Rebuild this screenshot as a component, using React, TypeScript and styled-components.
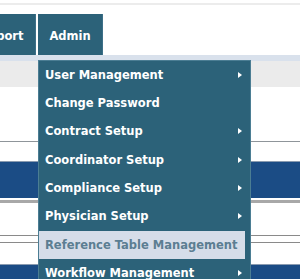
import React from "react";
import styled, { createGlobalStyle } from "styled-components";

const Global = createGlobalStyle`
  html, body { margin: 0; padding: 0; overflow: hidden; background: #ffffff; }
  #root { width: 304px; height: 279px; overflow: hidden; position: relative; }
`;

const Page = styled.div`
  position: relative;
  width: 300px;
  height: 279px;
  font-family: "DejaVu Sans", Verdana, sans-serif;
`;

const TopRule = styled.div`
  margin-top: 3px;
  height: 2px;
  background: #ececec;
`;

const Nav = styled.nav`
  display: flex;
  gap: 2px;
  margin-top: 9px;
  margin-left: -32px;
  height: 41px;
  background: #ffffff;
`;

const NavItem = styled.div<{ $w: number }>`
  width: ${(p) => p.$w}px;
  background: #2c6279;
  color: #ffffff;
  font-weight: bold;
  font-size: 11.5px;
  display: flex;
  align-items: center;
  justify-content: center;
  padding-top: 3px;
  box-sizing: border-box;
  border-right: 1px solid #3d7088;
`;

const SubStrip = styled.div`
  height: 6px;
  background: #d9e1ec;
`;

const SubBand = styled.div`
  height: 26px;
  background: #ebebeb;
`;

const Spacer = styled.div<{ $h: number }>`
  height: ${(p) => p.$h}px;
`;

const Line = styled.div<{ $h?: number; $c?: string }>`
  height: ${(p) => p.$h ?? 1}px;
  background: ${(p) => p.$c ?? "#9a9a9a"};
`;

const BlueBand = styled.div<{ $h: number }>`
  height: ${(p) => p.$h}px;
  background: #1b4c85;
  border-top: 1px solid #8a9bb0;
  box-sizing: border-box;
`;

const Menu = styled.ul`
  position: absolute;
  left: 38px;
  top: 57px;
  width: 213px;
  height: 240px;
  margin: 0;
  padding: 0;
  list-style: none;
  background: #2c6279;
  border: 1px solid #4b7d93;
  border-bottom: none;
  box-sizing: border-box;
`;

const MenuItem = styled.li<{ $active?: boolean }>`
  height: 28.35px;
  margin-right: 5px;
  display: flex;
  align-items: center;
  justify-content: space-between;
  padding: 0 3px 1px 6px;
  box-sizing: border-box;
  font-size: 11.5px;
  font-weight: bold;
  color: ${(p) => (p.$active ? "#5c7e92" : "#ffffff")};
  background: ${(p) => (p.$active ? "#d6dde9" : "transparent")};
  white-space: nowrap;
`;

const Arrow = styled.span`
  width: 0;
  height: 0;
  border-top: 3px solid transparent;
  border-bottom: 3px solid transparent;
  border-left: 4px solid #ffffff;
`;

const items: { label: string; sub: boolean; active?: boolean }[] = [
  { label: "User Management", sub: true },
  { label: "Change Password", sub: false },
  { label: "Contract Setup", sub: true },
  { label: "Coordinator Setup", sub: true },
  { label: "Compliance Setup", sub: true },
  { label: "Physician Setup", sub: true },
  { label: "Reference Table Management", sub: false, active: true },
  { label: "Workflow Management", sub: true },
];

export default function App() {
  return (
    <>
      <Global />
      <Page>
        <TopRule />
        <Nav>
          <NavItem $w={68}>Report</NavItem>
          <NavItem $w={65}>Admin</NavItem>
        </Nav>
        <SubStrip />
        <SubBand />
        <Spacer $h={54} />
        <Line $h={1} $c="#8f959a" />
        <Spacer $h={19} />
        <BlueBand $h={37} />
        <Spacer $h={2} />
        <Line $h={3} $c="#a8a8a8" />
        <Spacer $h={32} />
        <Line $h={1} $c="#8a8a8a" />
        <Spacer $h={6} />
        <Line $h={1} $c="#8a8a8a" />
        <Spacer $h={21} />
        <BlueBand $h={20} />
        <Menu>
          {items.map((it) => (
            <MenuItem key={it.label} $active={it.active}>
              <span>{it.label}</span>
              {it.sub && <Arrow />}
            </MenuItem>
          ))}
        </Menu>
      </Page>
    </>
  );
}
